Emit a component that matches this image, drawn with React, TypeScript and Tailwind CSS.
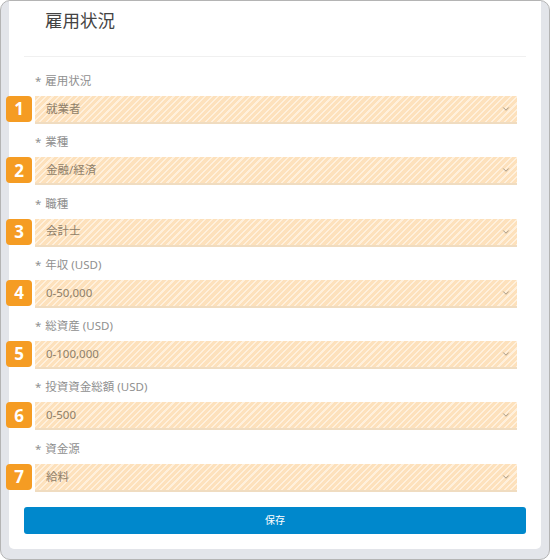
import { ChevronDown } from "lucide-react";

const fields = [
  { label: "雇用状況", value: "就業者" },
  { label: "業種", value: "金融/経済" },
  { label: "職種", value: "会計士" },
  { label: "年収 (USD)", value: "0-50,000" },
  { label: "総資産 (USD)", value: "0-100,000" },
  { label: "投資資金総額 (USD)", value: "0-500" },
  { label: "資金源", value: "給料" },
];

function Field({ label, value, index }: { label: string; value: string; index: number }) {
  return (
    <div className="h-[61.3px] pl-[11px] pr-[9px]">
      <div className="h-[27px] pt-[7px] text-[11.5px] leading-[16px] text-[#8f8f8f]">
        <span className="mr-1">*</span>
        {label}
      </div>
      <div className="relative mt-[3px] flex h-[28px] items-center justify-between border-b-2 border-[#f0dcc0] bg-[#fde3c0] bg-[repeating-linear-gradient(135deg,#fde1bc_0px,#fde1bc_3px,#fff0dc_3px,#fff0dc_4.5px)] pl-[11px] pr-[6px] text-[11.5px] text-[#8f7f6a]">
        <span className="mt-[-1px]">{value}</span>
        <ChevronDown className="h-[10px] w-[10px] text-[#6f6a64]" strokeWidth={1.5} />
        <div className="absolute left-[-29px] top-0 flex h-[26px] w-[26px] items-center justify-center rounded-[4px] bg-[#f59c23] text-[17px] font-bold text-white">
          {index}
        </div>
      </div>
    </div>
  );
}

export default function App() {
  return (
    <div className="h-[560px] w-[550px] bg-white font-['Noto_Sans','Noto_Sans_CJK_JP',sans-serif]">
      <div className="h-[560px] rounded-[10px] border border-[#b4b4b4] bg-[#e3e5ea] pl-2 pr-2">
        <div className="h-[548px] rounded-b-[5px] bg-white px-[15px]">
          <div className="h-[56px] border-b border-[#f0f0f0] pl-[21px] pt-[7px] text-[17.5px] leading-[24px] text-[#444444]">
            雇用状況
          </div>
          <div className="pt-[9px]">
            {fields.map((f, i) => (
              <Field key={f.label} label={f.label} value={f.value} index={i + 1} />
            ))}
          </div>
          <button className="mt-[12px] flex h-[27px] w-full items-center justify-center rounded-[3px] bg-[#0088cc] text-[10px] text-white">
            保存
          </button>
        </div>
      </div>
    </div>
  );
}
